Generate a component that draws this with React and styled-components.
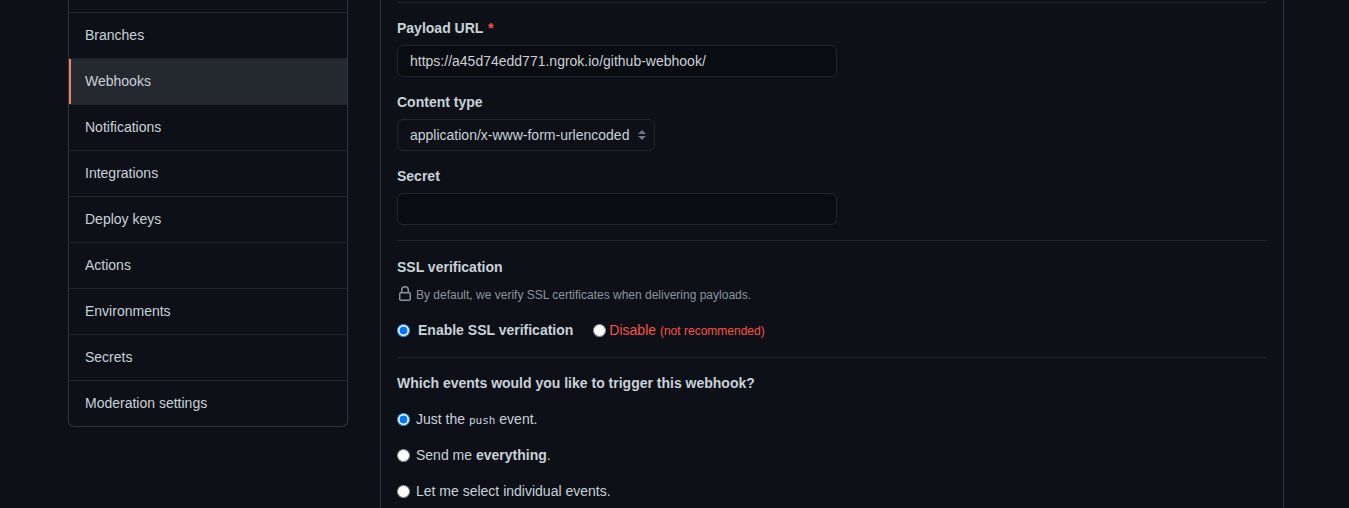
import React from "react";
import styled, { createGlobalStyle } from "styled-components";

const GlobalStyle = createGlobalStyle`
  *, *::before, *::after { box-sizing: border-box; }
  body {
    margin: 0;
    background: #0d1117;
    color: #c9d1d9;
    font-family: "Liberation Sans", Arial, sans-serif;
    font-size: 14px;
    line-height: 21px;
  }
`;

const Page = styled.div`
  display: flex;
  align-items: flex-start;
  gap: 32px;
  min-height: 100vh;
  padding: 0 65px 0 68px;
  border-bottom: 4px solid #0d0a14;
`;

const Menu = styled.nav`
  flex: 0 0 280px;
  border: 1px solid #30363d;
  border-top: 0;
  border-radius: 0 0 6px 6px;
  overflow: hidden;
`;

const MenuTop = styled.div`
  height: 13px;
  border-bottom: 1px solid #21262d;
`;

const MenuItem = styled.a`
  display: block;
  padding: 12px 16px;
  color: #c9d1d9;
  text-decoration: none;
  background: ${(p) => (p.$active ? "#24292f" : "transparent")};
  box-shadow: ${(p) => (p.$active ? "inset 2px 0 0 #f78166" : "none")};
  & + & { border-top: 1px solid #21262d; }
`;

const Panel = styled.main`
  flex: 1;
  min-width: 0;
  align-self: stretch;
  padding: 2px 16px 0;
  border: solid #30363d;
  border-width: 0 1px;
`;

const Divider = styled.hr`
  height: 1px;
  margin: 0;
  border: 0;
  background: #21262d;
`;

const Section = styled.section`
  padding: ${(p) => (p.$roomy ? "16px" : "15px")} 0;
`;

const Fields = styled.div`
  display: grid;
  gap: 15px;
`;

const Field = styled.div`
  display: grid;
  justify-items: start;
  gap: 6px;
`;

const Label = styled.label`
  font-weight: 600;
`;

const Required = styled.span`
  padding-left: 1px;
  color: #f85149;
`;

const TextInput = styled.input`
  width: 440px;
  max-width: 100%;
  height: 32px;
  padding: 4px 12px;
  color: #c9d1d9;
  font: inherit;
  background: #090c10;
  border: 1px solid #21262d;
  border-radius: 6px;
  outline: none;
`;

const SelectWrap = styled.div`
  position: relative;
  width: 258px;
  max-width: 100%;
`;

const Select = styled.select`
  display: block;
  width: 100%;
  height: 32px;
  padding: 4px 24px 4px 12px;
  color: #c9d1d9;
  font: inherit;
  appearance: none;
  background: #0d1117;
  border: 1px solid #21262d;
  border-radius: 6px;
`;

const SelectArrows = styled.svg`
  position: absolute;
  top: 11px;
  right: 9px;
  pointer-events: none;
`;

const Heading = styled.h2`
  margin: 0;
  font-size: 14px;
  font-weight: 600;
  line-height: 21px;
`;

const Note = styled.p`
  display: flex;
  align-items: center;
  gap: 3px;
  margin: 7px 0 0;
  color: #8b949e;
  font-size: 12px;
  line-height: 20px;
`;

const LockIcon = styled.svg`
  flex: none;
  margin-bottom: 2px;
  fill: #8b949e;
`;

const Choices = styled.div`
  display: flex;
  flex-direction: ${(p) => (p.$row ? "row" : "column")};
  gap: ${(p) => (p.$row ? "20px" : "15px")};
  margin-top: 15px;
`;

const Choice = styled.label`
  display: flex;
  align-items: center;
  gap: ${(p) => p.$gap || "6px"};
  color: ${(p) => (p.$danger ? "#f85149" : "inherit")};
  font-weight: ${(p) => (p.$bold ? 600 : 400)};
`;

const Radio = styled.input`
  width: 13px;
  height: 13px;
  margin: 0;
`;

const Small = styled.small`
  font-size: 12px;
  line-height: 1;
`;

const Code = styled.code`
  font-family: "DejaVu Sans Mono", monospace;
  font-size: 11px;
  line-height: 1;
`;

const items = [
  "Branches",
  "Webhooks",
  "Notifications",
  "Integrations",
  "Deploy keys",
  "Actions",
  "Environments",
  "Secrets",
  "Moderation settings",
];

export default function App() {
  return (
    <>
      <GlobalStyle />
      <Page>
        <Menu aria-label="Repository settings">
          <MenuTop />
          {items.map((item) => (
            <MenuItem key={item} href="#" $active={item === "Webhooks"}>
              {item}
            </MenuItem>
          ))}
        </Menu>
        <Panel>
          <Divider />
          <Section>
            <Fields>
              <Field>
                <Label htmlFor="url">
                  Payload URL <Required>*</Required>
                </Label>
                <TextInput id="url" type="text" defaultValue="https://a45d74edd771.ngrok.io/github-webhook/" />
              </Field>
              <Field>
                <Label htmlFor="type">Content type</Label>
                <SelectWrap>
                  <Select id="type">
                    <option>application/x-www-form-urlencoded</option>
                  </Select>
                  <SelectArrows width="8" height="10" viewBox="0 0 8 10" fill="#6e7681" aria-hidden="true">
                    <path d="M4 0 8 4H0ZM4 10 0 6h8Z" />
                  </SelectArrows>
                </SelectWrap>
              </Field>
              <Field>
                <Label htmlFor="secret">Secret</Label>
                <TextInput id="secret" type="text" />
              </Field>
            </Fields>
          </Section>
          <Divider />
          <Section $roomy>
            <Heading>SSL verification</Heading>
            <Note>
              <LockIcon width="16" height="16" viewBox="0 0 16 16" aria-hidden="true">
                <path
                  fillRule="evenodd"
                  d="M4 4v2h-.25A1.75 1.75 0 0 0 2 7.75v5.5c0 .966.784 1.75 1.75 1.75h8.5A1.75 1.75 0 0 0 14 13.25v-5.5A1.75 1.75 0 0 0 12.25 6H12V4a4 4 0 1 0-8 0zm6.5 2V4a2.5 2.5 0 1 0-5 0v2h5zM12 7.5h.25a.25.25 0 0 1 .25.25v5.5a.25.25 0 0 1-.25.25h-8.5a.25.25 0 0 1-.25-.25v-5.5a.25.25 0 0 1 .25-.25H12z"
                />
              </LockIcon>
              By default, we verify SSL certificates when delivering payloads.
            </Note>
            <Choices $row>
              <Choice $bold $gap="8px">
                <Radio type="radio" name="ssl" defaultChecked />
                Enable SSL verification
              </Choice>
              <Choice $danger $gap="3px">
                <Radio type="radio" name="ssl" />
                <span>
                  Disable <Small>(not recommended)</Small>
                </span>
              </Choice>
            </Choices>
          </Section>
          <Divider />
          <Section>
            <Heading>Which events would you like to trigger this webhook?</Heading>
            <Choices>
              <Choice>
                <Radio type="radio" name="events" defaultChecked />
                <span>
                  Just the <Code>push</Code> event.
                </span>
              </Choice>
              <Choice>
                <Radio type="radio" name="events" />
                <span>
                  Send me <b>everything</b>.
                </span>
              </Choice>
              <Choice>
                <Radio type="radio" name="events" />
                Let me select individual events.
              </Choice>
            </Choices>
          </Section>
        </Panel>
      </Page>
    </>
  );
}
